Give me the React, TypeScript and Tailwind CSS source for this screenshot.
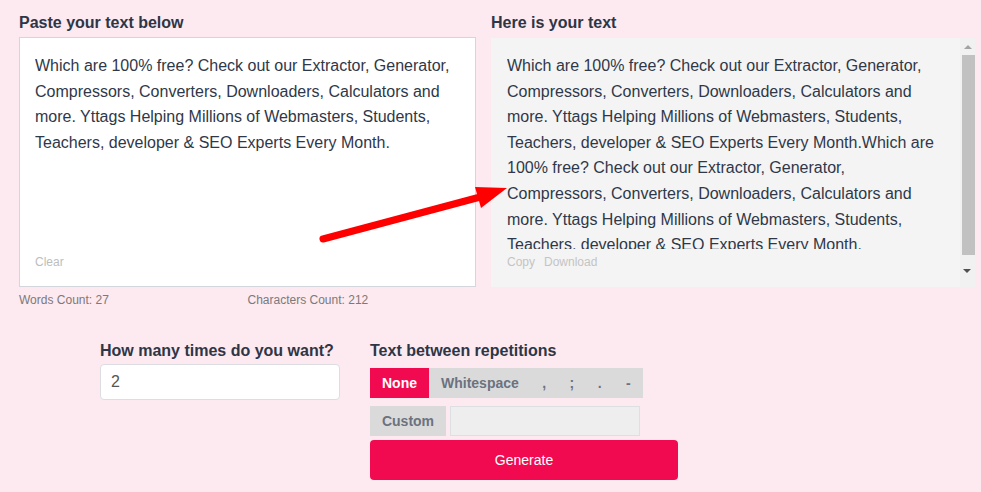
import { useState } from 'react'

const SAMPLE =
  'Which are 100% free? Check out our Extractor, Generator, Compressors, Converters, Downloaders, Calculators and more. Yttags Helping Millions of Webmasters, Students, Teachers, developer & SEO Experts Every Month.'

const SEPARATORS = [
  { key: 'none', label: 'None', cls: 'px-[12px]' },
  { key: 'space', label: 'Whitespace', cls: 'px-[12px]' },
  { key: 'comma', label: ',', cls: 'w-[27px]' },
  { key: 'semi', label: ';', cls: 'w-[28px]' },
  { key: 'dot', label: '.', cls: 'w-[28px]' },
  { key: 'dash', label: '-', cls: 'w-[29px]' },
]

export default function App() {
  const [sep, setSep] = useState('none')
  const [times, setTimes] = useState('2')

  const output = SAMPLE + SAMPLE

  return (
    <div className="relative min-h-screen w-full bg-[#fde9f0] font-['Liberation_Sans',Arial,sans-serif] text-[#2f3849]">
      {/* top: input / output */}
      <div className="grid grid-cols-[457px_484px] gap-x-[15px] pl-[19px] pt-[13px]">
        <div className="flex flex-col">
          <h2 className="mb-[4px] text-[16px] font-bold leading-[20px] text-[#2d3646]">Paste your text below</h2>
          <div className="flex h-[250px] flex-col border border-[#d3d6dc] bg-white px-[15px] pt-[15px]">
            <p className="h-[201px] overflow-hidden text-[16px] leading-[25.6px]">{SAMPLE}</p>
            <button className="w-fit text-[12px] leading-[16px] text-[#bdbdbd]">Clear</button>
          </div>
          <div className="mt-[5px] grid grid-cols-2 text-[12px] leading-[16px] text-[#7a7a7a]">
            <span>Words Count: 27</span>
            <span>Characters Count: 212</span>
          </div>
        </div>

        <div className="flex flex-col">
          <h2 className="mb-[4px] text-[16px] font-bold leading-[20px] text-[#2d3646]">Here is your text</h2>
          <div className="mt-[1px] flex h-[249px] bg-[#f4f4f4]">
            <div className="flex flex-1 flex-col pl-[16px] pr-[16px] pt-[15px]">
              <p className="h-[196px] overflow-hidden text-[16px] leading-[25.6px]">{output}</p>
              <div className="mt-[5px] flex gap-[9px] text-[12px] leading-[16px] text-[#c4c4c4]">
                <button>Copy</button>
                <button>Download</button>
              </div>
            </div>
            {/* scrollbar */}
            <div className="flex w-[15px] flex-col bg-[#f1f1f1]">
              <div className="flex h-[17px] items-center justify-center">
                <div className="h-0 w-0 border-x-[4px] border-b-[4px] border-x-transparent border-b-[#a3a3a3]" />
              </div>
              <div className="ml-[2px] h-[200px] bg-[#c1c1c1]" />
              <div className="flex flex-1 items-center justify-center pr-[1px]">
                <div className="h-0 w-0 border-x-[4px] border-t-[4px] border-x-transparent border-t-[#505050]" />
              </div>
            </div>
          </div>
        </div>
      </div>

      {/* bottom: options */}
      <div className="mt-[33px] flex gap-[30px] pl-[100px]">
        <div className="flex w-[240px] flex-col">
          <label className="mb-[3px] text-[16px] font-bold leading-[20px] text-[#2d3646]">How many times do you want?</label>
          <input
            value={times}
            onChange={e => setTimes(e.target.value)}
            className="h-[36px] rounded-[4px] border border-[#dcdde3] bg-white px-[10px] text-[16px] text-[#555] outline-none"
          />
        </div>

        <div className="flex w-[308px] flex-col">
          <label className="mb-[7px] text-[16px] font-bold leading-[20px] text-[#2d3646]">Text between repetitions</label>
          <div className="flex h-[30px] w-fit bg-[#dadada]">
            {SEPARATORS.map(s => (
              <button
                key={s.key}
                onClick={() => setSep(s.key)}
                className={`${s.cls} flex items-center justify-center text-[14px] font-bold ${
                  sep === s.key ? 'bg-[#f20a51] text-white' : 'text-[#6b7280]'
                }`}
              >
                {s.label}
              </button>
            ))}
          </div>
          <div className="mt-[8px] flex h-[30px] gap-[4px]">
            <button className="w-[76px] bg-[#dadada] text-[14px] font-bold text-[#6b7280]">Custom</button>
            <input className="w-[190px] border border-[#dddfe3] bg-[#eeeeee] px-2 text-[14px] outline-none" />
          </div>
          <button className="mt-[4px] h-[40px] rounded-[4px] bg-[#f20a51] text-[14px] text-white">Generate</button>
        </div>
      </div>

      {/* annotation arrow */}
      <svg className="pointer-events-none absolute left-0 top-0" width="981" height="492">
        <line x1="323" y1="239" x2="484" y2="196" stroke="#ff0000" strokeWidth="7" strokeLinecap="round" />
        <polygon points="507,188 475,187 481,208" fill="#ff0000" />
      </svg>
    </div>
  )
}
